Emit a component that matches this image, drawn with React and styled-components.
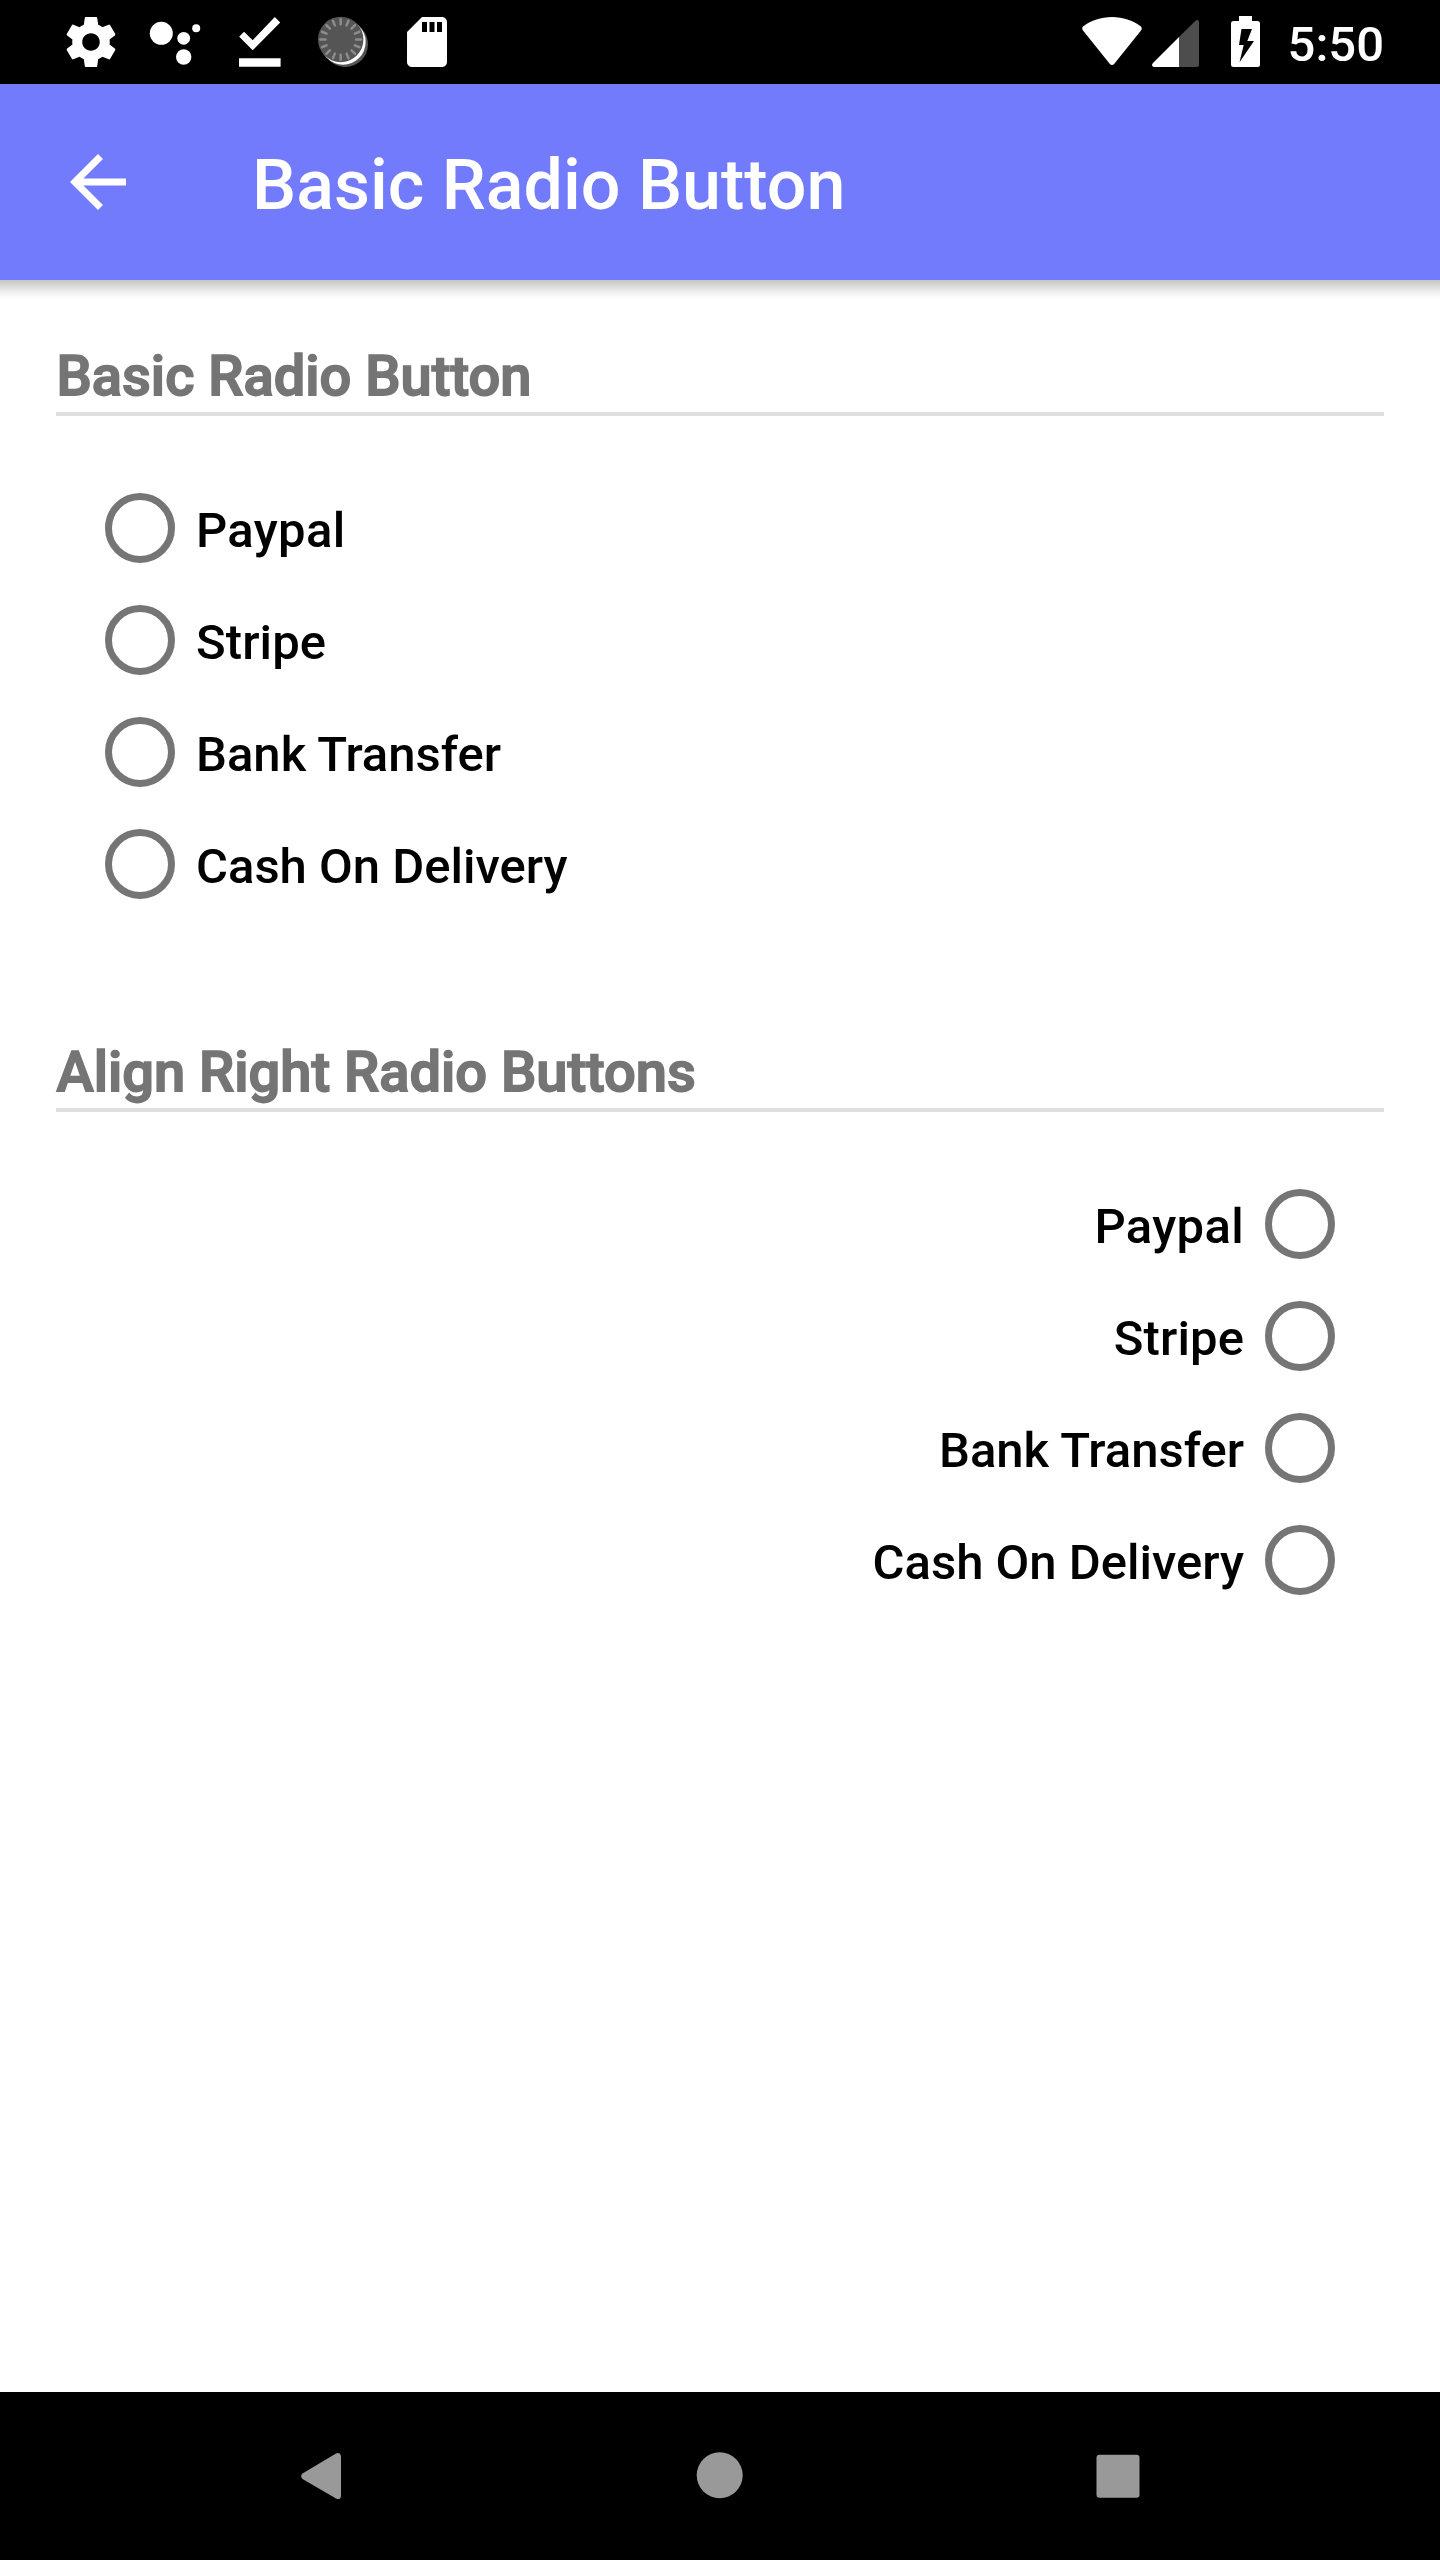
import React from "react";
import styled, { createGlobalStyle } from "styled-components";

const GlobalStyle = createGlobalStyle`
  * { box-sizing: border-box; }
  body { margin: 0; background: #fff; font-family: Roboto, sans-serif; }
`;

const Screen = styled.div`
  display: flex;
  flex-direction: column;
  width: 1440px;
  height: 2560px;
  background: #fff;
  overflow: hidden;
`;

const StatusBar = styled.header`
  display: flex;
  justify-content: space-between;
  height: 84px;
  padding: 0 56px 0 61px;
  background: #000;
  color: #fff;
`;

const Notifications = styled.div`
  display: flex;
  align-items: center;
  gap: 24px;
`;

const SystemIcons = styled.div`
  display: flex;
  align-items: center;
`;

const Glyph = styled.svg`
  display: block;
  flex: none;
  fill: currentColor;
`;

const Clock = styled.time`
  margin-left: 24px;
  padding-top: 5px;
  font-size: 49px;
  font-weight: 500;
  line-height: 80px;
`;

const AppBar = styled.div`
  display: flex;
  align-items: center;
  flex: none;
  gap: 112px;
  height: 196px;
  padding: 0 56px;
  background: #727bfb;
  color: #fff;
`;

const BackButton = styled.button`
  padding: 0;
  border: 0;
  background: none;
  color: inherit;
`;

const Title = styled.h1`
  margin: 0;
  padding-top: 6px;
  font-size: 70px;
  font-weight: 500;
  line-height: 82px;
  white-space: nowrap;
`;

const BarShadow = styled.div`
  flex: none;
  height: 20px;
  background: linear-gradient(#c4c4c4, #d6d6d6 25%, #ececec 55%, #f9f9f9 80%, #fff);
`;

const Content = styled.main`
  flex: 1;
  padding: 0 56px;
`;

const Section = styled.section`
  height: 696px;
`;

const Heading = styled.h2`
  height: 116px;
  margin: 0;
  padding: 43px 0 0 0.5px;
  border-bottom: 4px solid #e0e0e0;
  color: #757575;
  font-size: 56px;
  font-weight: 500;
  line-height: 66px;
  -webkit-text-stroke: 1.75px #757575;
`;

const RadioGroup = styled.div`
  display: flex;
  flex-direction: column;
  align-items: ${(p) => (p.$end ? "flex-end" : "flex-start")};
  padding: 56px 28px 0;
`;

const Option = styled.label`
  display: flex;
  flex-direction: ${(p) => (p.$end ? "row-reverse" : "row")};
  align-items: center;
  height: 112px;
`;

const Radio = styled.input`
  appearance: none;
  width: 70px;
  height: 70px;
  margin: 0 21px;
  border: 7px solid #757575;
  border-radius: 50%;
`;

const OptionText = styled.span`
  padding-top: 6px;
  color: #000;
  font-size: 49px;
  font-weight: 500;
  letter-spacing: ${(p) => p.$tracking || 0}px;
  line-height: 58px;
  white-space: nowrap;
`;

const NavBar = styled.nav`
  display: flex;
  flex: none;
  justify-content: center;
  height: 168px;
  background: #000;
  color: #999;
`;

const NavButton = styled.button`
  display: flex;
  align-items: center;
  justify-content: center;
  width: 398px;
  padding: 0;
  border: 0;
  background: none;
  color: inherit;
`;

const methods = [
  { label: "Paypal", tracking: 0.35 },
  { label: "Stripe", tracking: 0.1 },
  { label: "Bank Transfer" },
  { label: "Cash On Delivery" },
];
const ticks = Array.from({ length: 16 }, (_, i) => i * 22.5);

function Methods({ title, name, end }) {
  return (
    <Section>
      <Heading>{title}</Heading>
      <RadioGroup $end={end}>
        {methods.map((m) => (
          <Option key={m.label} $end={end}>
            <Radio type="radio" name={name} />
            <OptionText $tracking={m.tracking}>{m.label}</OptionText>
          </Option>
        ))}
      </RadioGroup>
    </Section>
  );
}

export default function App() {
  return (
    <Screen>
      <GlobalStyle />
      <StatusBar>
        <Notifications>
          <Glyph width="60" height="60" viewBox="0 0 24 24">
            <path d="M19.43 12.98c.04-.32.07-.64.07-.98s-.03-.66-.07-.98l2.11-1.65c.19-.15.24-.42.12-.64l-2-3.46c-.12-.22-.39-.3-.61-.22l-2.49 1c-.52-.4-1.08-.73-1.69-.98l-.38-2.65C14.46 2.18 14.25 2 14 2h-4c-.25 0-.46.18-.49.42l-.38 2.65c-.61.25-1.17.59-1.69.98l-2.49-1c-.23-.09-.49 0-.61.22l-2 3.46c-.13.22-.07.49.12.64l2.11 1.65c-.04.32-.07.65-.07.98s.03.66.07.98l-2.11 1.65c-.19.15-.24.42-.12.64l2 3.46c.12.22.39.3.61.22l2.49-1c.52.4 1.08.73 1.69.98l.38 2.65c.03.24.24.42.49.42h4c.25 0 .46-.18.49-.42l.38-2.65c.61-.25 1.17-.59 1.69-.98l2.49 1c.23.09.49 0 .61-.22l2-3.46c.12-.22.07-.49-.12-.64l-2.11-1.65zM12 15.5c-1.93 0-3.500-1.57-3.500-3.500s1.57-3.500 3.500-3.500 3.500 1.57 3.500 3.500-1.57 3.500-3.500 3.500z" />
          </Glyph>
          <Glyph width="60" height="60" viewBox="0 0 60 60">
            <circle cx="16.3" cy="21.3" r="11.5" />
            <circle cx="38.7" cy="26.3" r="6.4" />
            <circle cx="51.2" cy="16.2" r="4" />
            <circle cx="38.7" cy="45" r="7.7" />
          </Glyph>
          <Glyph width="60" height="60" viewBox="0 0 60 60">
            <path d="M10.2 24.7 15 19.7 23.7 28.2 45.8 5 51.2 10.4 23.7 38.3ZM10 46.3H51.6V54.8H10Z" />
          </Glyph>
          <Glyph width="60" height="60" viewBox="0 0 60 60">
            <circle cx="32.3" cy="32.2" r="22.7" fill="#555" />
            <circle cx="30" cy="30" r="22.7" />
            <circle cx="27.7" cy="27.5" r="22.7" fill="#555" />
            <g stroke="#8c8c8c" strokeWidth="2.5" strokeLinecap="round">
              {ticks.map((a) => (
                <path key={a} d="M43 27.5H48" transform={`rotate(${a} 27.7 27.5)`} />
              ))}
            </g>
          </Glyph>
          <Glyph width="60" height="60" viewBox="0 0 24 24">
            <path d="M18 2h-8L4.02 8 4 20c0 1.1.9 2 2 2h12c1.1 0 2-.9 2-2V4c0-1.1-.9-2-2-2zm-6 6h-2V4h2v4zm3 0h-2V4h2v4zm3 0h-2V4h2v4z" />
          </Glyph>
        </Notifications>
        <SystemIcons>
          <Glyph width="182" height="84" viewBox="1082 0 182 84">
            <path d="M1083 30.5C1081.8 29 1082 27.3 1083.7 26.1C1091 20.5 1101 17 1112 17C1123 17 1133 20.5 1140.3 26.1C1142 27.3 1142.2 29 1141 30.5L1114.3 63.7C1113 65.5 1111 65.5 1109.7 63.7Z" />
            <path fill="#4d4d4d" d="M1179 37 1195.5 20.7C1197 19.3 1199 20 1199 22V64.5Q1199 67 1196.5 67H1179Z" />
            <path d="M1179 37V67H1154.5C1152 67 1151.3 64.7 1153 63Z" />
            <path fillRule="evenodd" d="M1239 16H1252V21H1257.5Q1260 21 1260 23.5V64.5Q1260 67 1257.5 67H1233.5Q1231 67 1231 64.5V23.5Q1231 21 1233.5 21H1239ZM1241.5 29 1239 45H1243.7L1239.5 62.3 1254 41H1247.3L1252 29Z" />
          </Glyph>
          <Clock>5:50</Clock>
        </SystemIcons>
      </StatusBar>
      <AppBar>
        <BackButton aria-label="Back">
          <Glyph width="84" height="84" viewBox="0 0 24 24">
            <path d="M20 11H7.83l5.59-5.59L12 4l-8 8 8 8 1.41-1.41L7.83 13H20v-2z" />
          </Glyph>
        </BackButton>
        <Title>Basic Radio Button</Title>
      </AppBar>
      <BarShadow />
      <Content>
        <Methods title="Basic Radio Button" name="basic" />
        <Methods title="Align Right Radio Buttons" name="right" end />
      </Content>
      <NavBar>
        <NavButton aria-label="Back">
          <Glyph width="60" height="60" viewBox="292 2446 60 60">
            <path d="M302.5 2473.5 336 2453.5Q338.5 2452.3 340 2453.8Q341 2455 341 2457V2495.5Q341 2497.5 340 2498.5Q338.5 2499.7 336 2498.5L302.5 2479Q299.7 2476.2 302.5 2473.5Z" />
          </Glyph>
        </NavButton>
        <NavButton aria-label="Home">
          <Glyph width="60" height="60" viewBox="0 0 60 60">
            <circle cx="29.7" cy="29.3" r="23" />
          </Glyph>
        </NavButton>
        <NavButton aria-label="Recent apps">
          <Glyph width="60" height="60" viewBox="0 0 60 60">
            <rect x="8.5" y="8.7" width="43" height="43" rx="3" />
          </Glyph>
        </NavButton>
      </NavBar>
    </Screen>
  );
}
